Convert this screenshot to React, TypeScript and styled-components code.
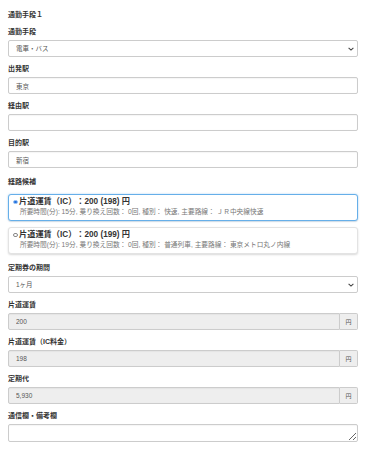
import React from 'react';
import styled, { createGlobalStyle } from 'styled-components';

const GlobalStyle = createGlobalStyle`
  html, body {
    margin: 0;
    padding: 0;
    background: #fff;
  }
  body {
    font-family: 'Liberation Sans', 'Noto Sans CJK JP', sans-serif;
    color: #333;
    text-spacing-trim: space-all;
  }
`;

type Route = {
  fare: string;
  detail: string;
};

const routes: Route[] = [
  {
    fare: '片道運賃（IC）：200 (198) 円',
    detail:
      '所要時間(分): 15分, 乗り換え回数： 0回, 種別： 快速, 主要路線： ＪＲ中央線快速',
  },
  {
    fare: '片道運賃（IC）：200 (199) 円',
    detail:
      '所要時間(分): 19分, 乗り換え回数： 0回, 種別： 普通列車, 主要路線： 東京メトロ丸ノ内線',
  },
];

const Chevron = (): React.ReactElement => (
  <ChevronIcon width="6" height="4" viewBox="0 0 6 4">
    <path d="M0.6 0.8 L3 3.1 L5.4 0.8" fill="none" stroke="#444" strokeWidth="1.1" />
  </ChevronIcon>
);

const App = (): React.ReactElement => {
  const [selected, setSelected] = React.useState(0);

  return (
    <>
      <GlobalStyle />
      <Form>
        <Title>通勤手段１</Title>

        <Group>
          <Label>通勤手段</Label>
          <SelectWrap>
            <Select defaultValue="train">
              <option value="train">電車・バス</option>
            </Select>
            <Chevron />
          </SelectWrap>
        </Group>

        <Group>
          <Label>出発駅</Label>
          <Input defaultValue="東京" />
        </Group>

        <Group>
          <Label>経由駅</Label>
          <Input defaultValue="" />
        </Group>

        <Group>
          <Label>目的駅</Label>
          <Input defaultValue="新宿" />
        </Group>

        <Group $extraTop>
          <Label $loose>経路候補</Label>
          <Candidates>
            {routes.map((route, i) => (
              <Candidate
                key={route.fare}
                $active={i === selected}
                onClick={() => setSelected(i)}
              >
                <CandidateTitle>
                  <RadioDot $checked={i === selected} />
                  {route.fare}
                </CandidateTitle>
                <CandidateDetail>{route.detail}</CandidateDetail>
              </Candidate>
            ))}
          </Candidates>
        </Group>

        <Group>
          <Label>定期券の期間</Label>
          <SelectWrap>
            <Select defaultValue="1">
              <option value="1">1ヶ月</option>
            </Select>
            <Chevron />
          </SelectWrap>
        </Group>

        <Group>
          <Label>片道運賃</Label>
          <InputGroup>
            <Input readOnly defaultValue="200" />
            <Addon>円</Addon>
          </InputGroup>
        </Group>

        <Group>
          <Label>片道運賃（IC料金）</Label>
          <InputGroup>
            <Input readOnly defaultValue="198" />
            <Addon>円</Addon>
          </InputGroup>
        </Group>

        <Group>
          <Label>定期代</Label>
          <InputGroup>
            <Input readOnly defaultValue="5,930" />
            <Addon>円</Addon>
          </InputGroup>
        </Group>

        <Group>
          <Label>通信欄・備考欄</Label>
          <TextArea />
        </Group>
      </Form>
    </>
  );
};

export default App;

const Form = styled.form`
  display: flex;
  flex-direction: column;
  padding: 10px 8px;
  width: 350px;
`;

const Title = styled.div`
  font-size: 7px;
  line-height: 10px;
  font-weight: bold;
  margin-bottom: 7px;
`;

const Group = styled.div<{ $extraTop?: boolean }>`
  display: flex;
  flex-direction: column;
  margin-bottom: 7px;
  margin-top: ${(p) => (p.$extraTop ? '2px' : '0')};
`;

const Label = styled.label<{ $loose?: boolean }>`
  font-size: 7px;
  line-height: 10px;
  font-weight: bold;
  color: #333;
  margin-bottom: ${(p) => (p.$loose ? '7px' : '3px')};
`;

const Input = styled.input`
  box-sizing: border-box;
  flex: none;
  min-width: 0;
  width: 100%;
  height: 17px;
  margin: 0;
  padding: 0 7px;
  border: 1px solid #ccc;
  border-radius: 2px;
  box-shadow: inset 0 0.5px 1px rgba(0, 0, 0, 0.075);
  font-family: inherit;
  font-size: 6.5px;
  color: #555;
  background: #fff;
  outline: none;

  &:read-only {
    background: #eee;
  }
`;

const SelectWrap = styled.div`
  position: relative;
  display: flex;
`;

const Select = styled.select`
  box-sizing: border-box;
  appearance: none;
  width: 100%;
  height: 17px;
  margin: 0;
  padding: 0 7px;
  border: 1px solid #ccc;
  border-radius: 2px;
  background: #fff;
  font-family: inherit;
  font-size: 6.5px;
  color: #555;
  outline: none;
`;

const ChevronIcon = styled.svg`
  position: absolute;
  right: 4px;
  top: 7px;
  pointer-events: none;
`;

const InputGroup = styled.div`
  display: flex;

  ${Input} {
    flex: 1;
    width: auto;
    border-radius: 2px 0 0 2px;
  }
`;

const Addon = styled.span`
  box-sizing: border-box;
  flex: none;
  display: flex;
  align-items: center;
  justify-content: center;
  width: 18px;
  height: 17px;
  border: 1px solid #ccc;
  border-left: 0;
  border-radius: 0 2px 2px 0;
  background: #eee;
  font-size: 6px;
  color: #555;
`;

const Candidates = styled.div`
  display: flex;
  flex-direction: column;
  gap: 6px;
  margin-bottom: 2px;
`;

const Candidate = styled.div<{ $active: boolean }>`
  box-sizing: border-box;
  height: 27px;
  padding: 2px 4px 4px;
  border: 1px solid ${(p) => (p.$active ? '#66afe9' : '#e3e3e3')};
  border-radius: 3px;
  background: #fff;
  box-shadow: ${(p) =>
    p.$active
      ? '0 0 2px rgba(102, 175, 233, 0.6), 0 1px 1px rgba(0, 0, 0, 0.1)'
      : '0 1px 2px rgba(0, 0, 0, 0.15)'};
  cursor: pointer;
`;

const CandidateTitle = styled.div`
  display: flex;
  align-items: center;
  gap: 1.5px;
  font-size: 8.2px;
  line-height: 10px;
  font-weight: bold;
  color: #333;
`;

const RadioDot = styled.span<{ $checked: boolean }>`
  box-sizing: border-box;
  display: inline-block;
  width: 4.5px;
  height: 4.5px;
  border-radius: 50%;
  border: ${(p) => (p.$checked ? '0.7px solid #9cc3f2' : '0.7px solid #888')};
  background: ${(p) => (p.$checked ? '#1f6fe0' : '#fff')};
`;

const CandidateDetail = styled.div`
  margin-left: 7px;
  font-size: 6.7px;
  line-height: 9px;
  color: #777;
  white-space: nowrap;
`;

const TextArea = styled.textarea`
  box-sizing: border-box;
  width: 100%;
  height: 18px;
  margin: 0;
  padding: 2px 7px;
  border: 1px solid #ccc;
  border-radius: 2px;
  box-shadow: inset 0 0.5px 1px rgba(0, 0, 0, 0.075);
  font-family: inherit;
  font-size: 6.5px;
  color: #555;
  resize: vertical;
  overflow-y: scroll;
  outline: none;

  &::-webkit-scrollbar {
    width: 9px;
  }
  &::-webkit-scrollbar-track {
    border-left: 1px solid #e6e6e6;
    background: #fafafa;
  }
`;
